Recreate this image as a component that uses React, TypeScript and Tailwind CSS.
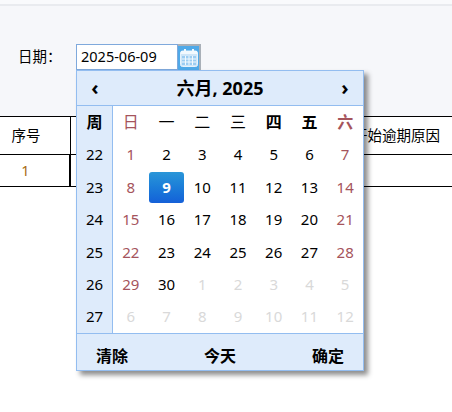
const font = { fontFamily: '"Noto Sans","Noto Sans CJK SC",sans-serif' };

const headers = [
  { t: "日", c: "text-[#a5545c]" },
  { t: "一", c: "" },
  { t: "二", c: "" },
  { t: "三", c: "" },
  { t: "四", c: "font-bold" },
  { t: "五", c: "font-bold" },
  { t: "六", c: "text-[#a5545c] font-bold" },
];

type Day = [string, boolean];
const weeks: { w: string; days: Day[] }[] = [
  { w: "22", days: [["1", true], ["2", true], ["3", true], ["4", true], ["5", true], ["6", true], ["7", true]] },
  { w: "23", days: [["8", true], ["9", true], ["10", true], ["11", true], ["12", true], ["13", true], ["14", true]] },
  { w: "24", days: [["15", true], ["16", true], ["17", true], ["18", true], ["19", true], ["20", true], ["21", true]] },
  { w: "25", days: [["22", true], ["23", true], ["24", true], ["25", true], ["26", true], ["27", true], ["28", true]] },
  { w: "26", days: [["29", true], ["30", true], ["1", false], ["2", false], ["3", false], ["4", false], ["5", false]] },
  { w: "27", days: [["6", false], ["7", false], ["8", false], ["9", false], ["10", false], ["11", false], ["12", false]] },
];

function CalendarIcon() {
  return (
    <svg width="20" height="20" viewBox="0 0 20 20" fill="none">
      <rect x="1.5" y="3" width="17" height="15.5" rx="2" fill="#cfe6f8" stroke="#e6f3fc" />
      <rect x="2" y="3" width="16" height="3" fill="#f2f9fe" />
      <rect x="5" y="1" width="2" height="4" fill="#f2f9fe" />
      <rect x="13" y="1" width="2" height="4" fill="#f2f9fe" />
      <path d="M3 8h14v9H3z" fill="#9ccdf2" />
      <path d="M3 11h14M3 14h14M6.5 8v9M10 8v9M13.5 8v9" stroke="#f2f9fe" strokeWidth="1" />
    </svg>
  );
}

function Popup() {
  return (
    <div className="absolute left-0 top-[26px] w-[288px] h-[301px] bg-white border border-[#93bdf0] shadow-[4px_4px_5px_rgba(0,0,0,0.45)] flex flex-col text-black z-10">
      <div className="h-[35px] flex items-center justify-between bg-[#deebfb] border-b border-[#93bdf0] px-[14px] shrink-0">
        <span className="text-[20px] font-bold leading-none w-[8px] flex justify-center">‹</span>
        <span className="text-[18px] font-bold">六月, 2025</span>
        <span className="text-[20px] font-bold leading-none w-[8px] flex justify-center">›</span>
      </div>
      <div className="flex-1 flex">
        <div className="w-[36px] bg-[#deebfb] border-r border-[#93bdf0] flex flex-col shrink-0">
          <div className="flex-1 flex items-center justify-center text-[16px] font-bold">周</div>
          {weeks.map((r) => (
            <div key={r.w} className="flex-1 flex items-center justify-center text-[15px]">{r.w}</div>
          ))}
        </div>
        <div className="flex-1 flex flex-col">
          <div className="flex-1 grid grid-cols-7">
            {headers.map((h) => (
              <div key={h.t} className={`flex items-center justify-center text-[16px] ${h.c}`}>{h.t}</div>
            ))}
          </div>
          {weeks.map((r, i) => (
            <div key={r.w} className="flex-1 grid grid-cols-7">
              {r.days.map(([d, cur], j) => {
                const selected = i === 1 && j === 1;
                const weekend = j === 0 || j === 6;
                const color = !cur ? "text-[#d9d9d9]" : weekend ? "text-[#a5545c]" : "text-black";
                return (
                  <div key={j} className="flex items-center justify-center">
                    {selected ? (
                      <div className="w-[36px] h-[31px] rounded-[3px] bg-gradient-to-b from-[#2a96d8] to-[#1560d8] text-white font-bold text-[15px] flex items-center justify-center">{d}</div>
                    ) : (
                      <span className={`text-[15px] ${color}`}>{d}</span>
                    )}
                  </div>
                );
              })}
            </div>
          ))}
        </div>
      </div>
      <div className="h-[37px] flex items-center justify-between bg-[#deebfb] border-t border-[#93bdf0] px-[19px] pt-[7px] text-[16px] font-bold shrink-0">
        <span>清除</span>
        <span>今天</span>
        <span>确定</span>
      </div>
    </div>
  );
}

export default function App() {
  return (
    <div className="w-[452px] h-[412px] bg-white overflow-hidden text-[14.5px] text-black" style={font}>
      <div className="h-[6px] bg-[#f9fafc] border-b-2 border-[#e9ebef]" />
      <div className="h-[110px] bg-[#f6f7fa] pt-[38px] pl-[18px] flex items-start">
        <span className="w-[58px] h-[26px] flex items-center">日期：</span>
        <div className="relative flex">
          <div className="w-[102px] h-[26px] bg-white border border-[#7fa9dc] pl-[4px] flex items-center">2025-06-09</div>
          <div className="w-[23px] h-[26px] bg-[#4fa9e8] border-t-2 border-r-2 border-[#a9b0b8] flex items-center justify-center">
            <CalendarIcon />
          </div>
          <Popup />
        </div>
      </div>
      <div className="border-t border-b border-black">
        <div className="h-[38px] flex border-b border-black">
          <div className="w-[71px] border-r border-black pr-[18px] flex items-center justify-center">序号</div>
          <div className="flex-1 flex items-center justify-end pr-[12px]">开始逾期原因</div>
        </div>
        <div className="h-[31px] flex">
          <div className="w-[71px] border-r-2 border-black pr-[18px] flex items-center justify-center text-[#a86a10]">1</div>
        </div>
      </div>
    </div>
  );
}
